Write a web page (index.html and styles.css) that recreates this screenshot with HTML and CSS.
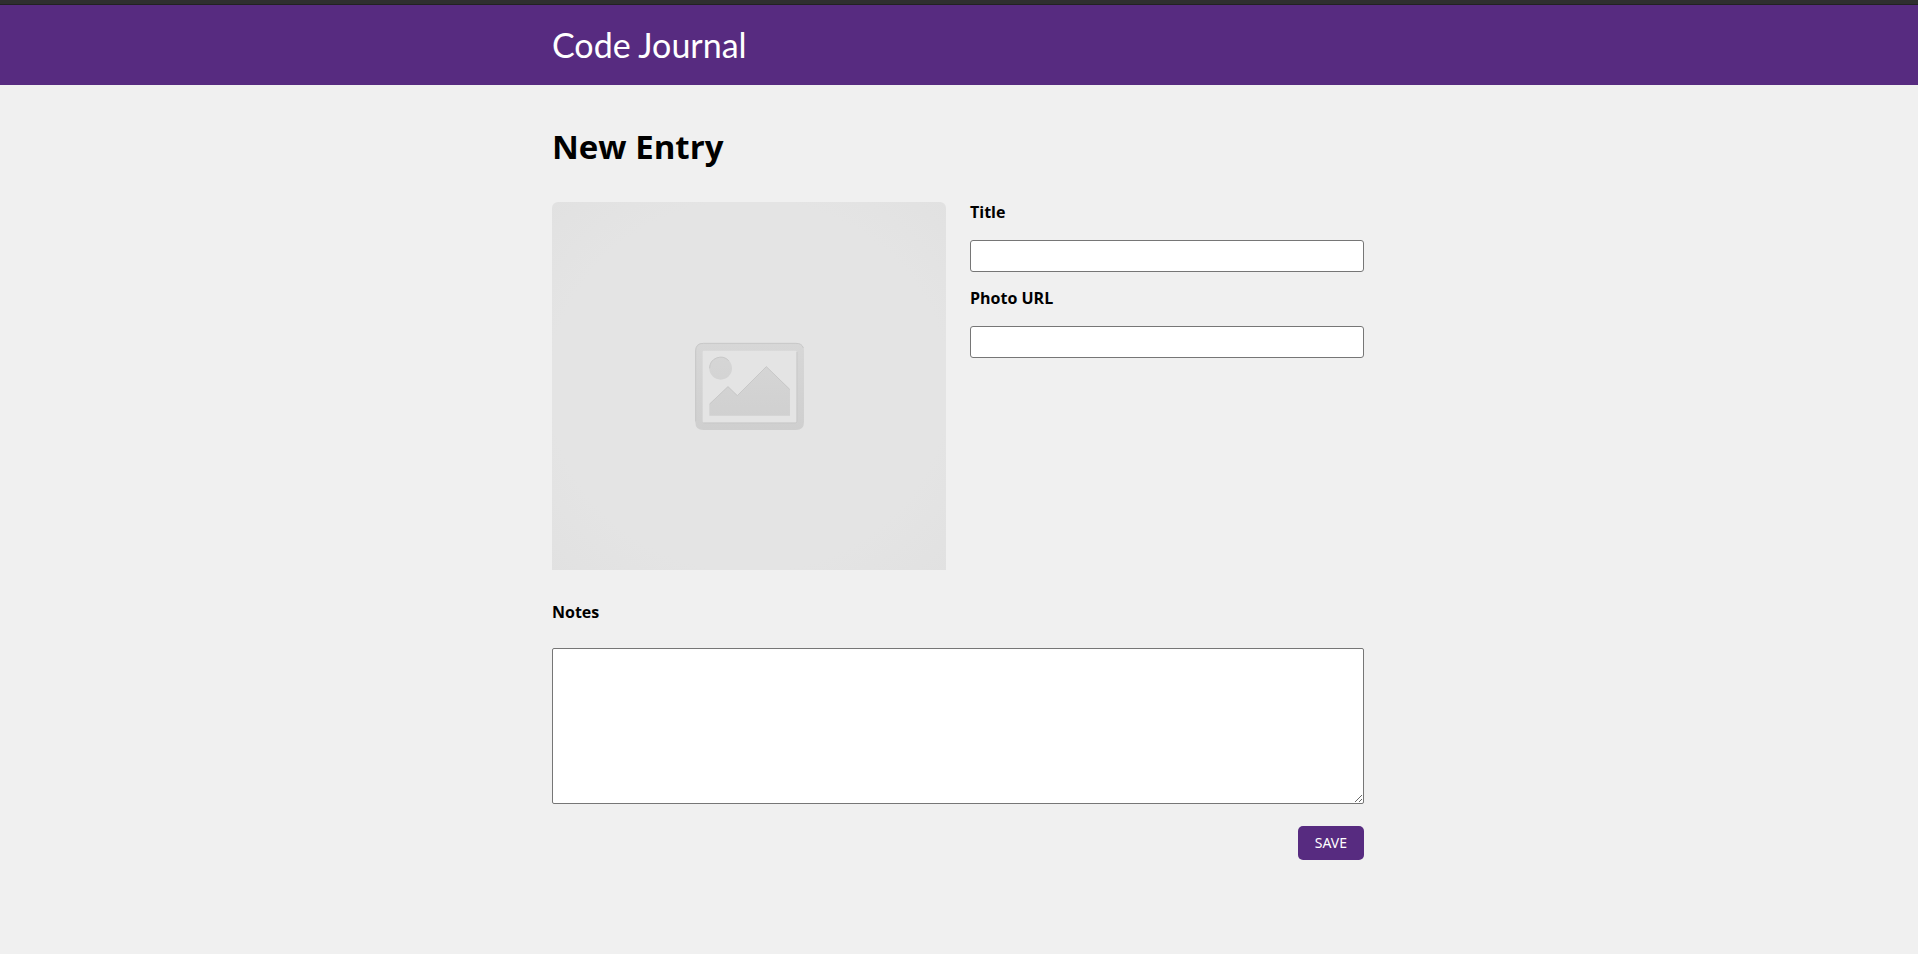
FILE: index.html
```html
<!DOCTYPE html>
<html lang="en">
<head>
  <meta charset="utf-8">
  <meta name="viewport" content="width=device-width, initial-scale=1">
  <title>Code Journal</title>
  <link rel="stylesheet" href="styles.css">
</head>
<body>
  <header class="site-header">
    <div class="container">
      <h1 class="brand">Code Journal</h1>
    </div>
  </header>
  <main class="container">
    <h2 class="page-title">New Entry</h2>
    <form class="entry-form">
      <div class="row">
        <svg class="photo" viewBox="0 0 394 368" role="img" aria-label="Placeholder image">
          <defs>
            <radialGradient id="backdrop" cx="50%" cy="50%" r="72%">
              <stop offset="0.7" stop-color="#e4e4e4"/>
              <stop offset="1" stop-color="#e1e1e1"/>
            </radialGradient>
            <linearGradient id="shade" x1="0" y1="69" x2="0" y2="330" gradientUnits="userSpaceOnUse">
              <stop offset="0" stop-color="#d7d7d7"/>
              <stop offset="1" stop-color="#cfcfcf"/>
            </linearGradient>
          </defs>
          <rect width="394" height="368" fill="url(#backdrop)"/>
          <g transform="translate(118 118) scale(0.3333)" fill="url(#shade)">
            <path fill-rule="evenodd" d="M100 69H378Q402 69 402 93V306Q402 330 378 330H100Q76 330 76 306V93Q76 69 100 69ZM102 92Q98 92 98 96V304Q98 308 102 308H376Q380 308 380 304V96Q380 92 376 92Z"/>
            <circle cx="152" cy="145" r="34"/>
            <path d="M118 287V252L174 199L202 226L289 139L360 208V287Z"/>
            <g fill="none" stroke="#c8c8c8" stroke-width="3">
              <path d="M77 304V93Q77 70 100 70H378Q396 70 400 84"/>
              <path d="M100 309H376Q381 309 381 304V96"/>
              <path d="M119 145A33 33 0 0 1 176 122"/>
              <path d="M119 252L174 200L202 227L289 140L359 208"/>
            </g>
          </g>
        </svg>
        <div class="fields">
          <label class="label" for="title">Title</label>
          <input class="input" id="title" name="title" type="text">
          <label class="label" for="photo-url">Photo URL</label>
          <input class="input" id="photo-url" name="photo" type="text">
        </div>
      </div>
      <label class="label notes-label" for="notes">Notes</label>
      <textarea class="notes" id="notes" name="notes"></textarea>
      <div class="actions">
        <button class="save" type="submit">SAVE</button>
      </div>
    </form>
  </main>
</body>
</html>
```

FILE: styles.css
```css
* {
  box-sizing: border-box;
}

body {
  margin: 0;
  background: #f0f0f0;
  color: #000;
  font-family: "Open Sans", "Noto Sans", sans-serif;
  font-size: 16px;
  border-top: 4px solid #2f2f2f;
}

.container {
  max-width: 860px;
  margin: 0 auto;
  padding: 0 25px 0 23px;
}

.site-header {
  background: #572b80;
  border-top: 1px solid #222;
}

.brand {
  margin: 0;
  color: #fff;
  font-family: Lato, sans-serif;
  font-size: 34px;
  font-weight: 400;
  line-height: 80px;
}

.page-title {
  margin: 40px 0 34px;
  font-size: 33px;
  font-weight: 700;
  line-height: 43px;
}

.row {
  display: grid;
  grid-template-columns: 1fr 1fr;
  gap: 24px;
}

.photo {
  display: block;
  width: 100%;
  border-radius: 6px 6px 0 0;
}

.label {
  display: block;
  margin-bottom: 18px;
  font-size: 16px;
  font-weight: 700;
  line-height: 20px;
}

.input {
  display: block;
  width: 100%;
  height: 32px;
  margin-bottom: 16px;
  padding: 4px 8px;
  border: 1px solid #767676;
  border-radius: 3px;
  background: #fff;
  font: inherit;
}

.notes-label {
  margin: 32px 0 26px;
}

.notes {
  display: block;
  width: 100%;
  height: 156px;
  padding: 8px;
  border: 1px solid #767676;
  border-radius: 2px;
  background: #fff;
  font: inherit;
  resize: vertical;
}

.actions {
  display: flex;
  justify-content: flex-end;
  padding: 22px 0;
}

.save {
  padding: 8px 17px;
  border: 0;
  border-radius: 5px;
  background: #572b80;
  color: #fff;
  font-family: "Noto Sans", sans-serif;
  font-size: 14px;
  line-height: 18px;
}
```
